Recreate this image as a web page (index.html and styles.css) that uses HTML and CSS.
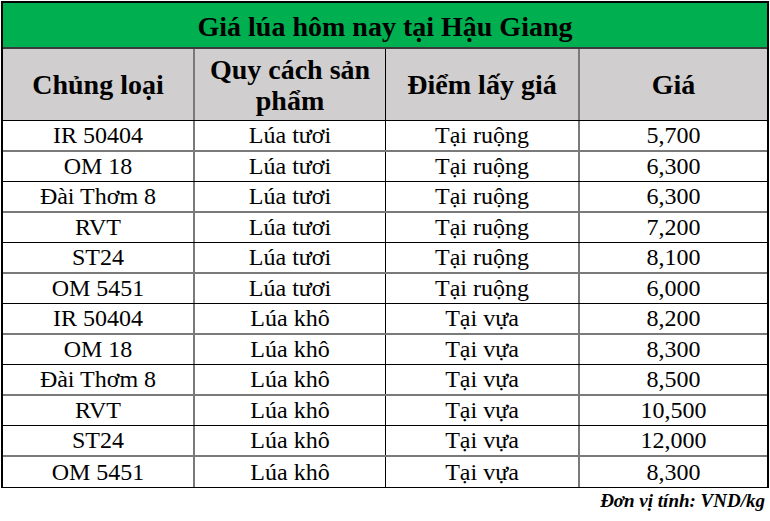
FILE: index.html
```html
<!DOCTYPE html>
<html lang="vi">
<head>
<meta charset="utf-8">
<title>Giá lúa hôm nay tại Hậu Giang</title>
<link rel="stylesheet" href="styles.css">
</head>
<body>
<div class="sheet">
  <div class="price-table">
    <div class="title">Giá lúa hôm nay tại Hậu Giang</div>
    <div class="row head">
      <div class="cell c1">Chủng loại</div>
      <div class="cell c2">Quy cách sản<br>phẩm</div>
      <div class="cell c3">Điểm lấy giá</div>
      <div class="cell c4">Giá</div>
    </div>
    <div class="row"><div class="cell c1">IR 50404</div><div class="cell c2">Lúa tươi</div><div class="cell c3">Tại ruộng</div><div class="cell c4">5,700</div></div>
    <div class="row"><div class="cell c1">OM 18</div><div class="cell c2">Lúa tươi</div><div class="cell c3">Tại ruộng</div><div class="cell c4">6,300</div></div>
    <div class="row"><div class="cell c1">Đài Thơm 8</div><div class="cell c2">Lúa tươi</div><div class="cell c3">Tại ruộng</div><div class="cell c4">6,300</div></div>
    <div class="row"><div class="cell c1">RVT</div><div class="cell c2">Lúa tươi</div><div class="cell c3">Tại ruộng</div><div class="cell c4">7,200</div></div>
    <div class="row"><div class="cell c1">ST24</div><div class="cell c2">Lúa tươi</div><div class="cell c3">Tại ruộng</div><div class="cell c4">8,100</div></div>
    <div class="row"><div class="cell c1">OM 5451</div><div class="cell c2">Lúa tươi</div><div class="cell c3">Tại ruộng</div><div class="cell c4">6,000</div></div>
    <div class="row"><div class="cell c1">IR 50404</div><div class="cell c2">Lúa khô</div><div class="cell c3">Tại vựa</div><div class="cell c4">8,200</div></div>
    <div class="row"><div class="cell c1">OM 18</div><div class="cell c2">Lúa khô</div><div class="cell c3">Tại vựa</div><div class="cell c4">8,300</div></div>
    <div class="row"><div class="cell c1">Đài Thơm 8</div><div class="cell c2">Lúa khô</div><div class="cell c3">Tại vựa</div><div class="cell c4">8,500</div></div>
    <div class="row"><div class="cell c1">RVT</div><div class="cell c2">Lúa khô</div><div class="cell c3">Tại vựa</div><div class="cell c4">10,500</div></div>
    <div class="row"><div class="cell c1">ST24</div><div class="cell c2">Lúa khô</div><div class="cell c3">Tại vựa</div><div class="cell c4">12,000</div></div>
    <div class="row last"><div class="cell c1">OM 5451</div><div class="cell c2">Lúa khô</div><div class="cell c3">Tại vựa</div><div class="cell c4">8,300</div></div>
  </div>
  <div class="unit">Đơn vị tính: VND/kg</div>
</div>
</body>
</html>
```
FILE: styles.css
```css
html, body {
  margin: 0;
  padding: 0;
  background: #ffffff;
}
body {
  color: #000;
  font-family: "Liberation Serif", "Times New Roman", serif;
}
.sheet,
.price-table,
.title,
.row,
.cell,
.unit {
  font-family: "Liberation Serif", "Times New Roman", serif;
}
.sheet {
  padding: 1px 0 0 1px;
  width: 768px;
}
.price-table {
  box-sizing: border-box;
  width: 768px;
  border: 2px solid #000;
  border-bottom: 1px solid #000;
}
.title {
  box-sizing: border-box;
  height: 46px;
  background: #00b050;
  border-bottom: 2px solid #3a3a3a;
  font-weight: bold;
  font-size: 28px;
  line-height: 47px;
  text-align: center;
}
.row {
  display: flex;
  box-sizing: border-box;
  height: 30.5px;
  font-size: 24px;
}
.row:nth-child(odd) {
  border-bottom: 2px solid #7a7a7a;
}
.row:nth-child(even) {
  border-bottom: 1px solid #000;
}
.row.last {
  border-bottom: none;
}
.row.head {
  height: 72px;
  background: #d0cece;
  border-bottom: 1px solid #000;
  font-weight: bold;
  font-size: 28px;
  line-height: 31px;
}
.cell {
  box-sizing: border-box;
  display: flex;
  align-items: center;
  justify-content: center;
  text-align: center;
  padding-top: 1px;
}
.c1 {
  width: 192px;
  border-right: 2px solid #7a7a7a;
}
.c2 {
  width: 191px;
  border-right: 1px solid #000;
}
.c3 {
  width: 194px;
  border-right: 2px solid #7a7a7a;
}
.c4 {
  flex: 1;
}
.head .cell {
  padding-top: 0;
}
.unit {
  text-align: right;
  font-weight: bold;
  font-style: italic;
  font-size: 19px;
  padding: 2px 4px 0 0;
}
```
